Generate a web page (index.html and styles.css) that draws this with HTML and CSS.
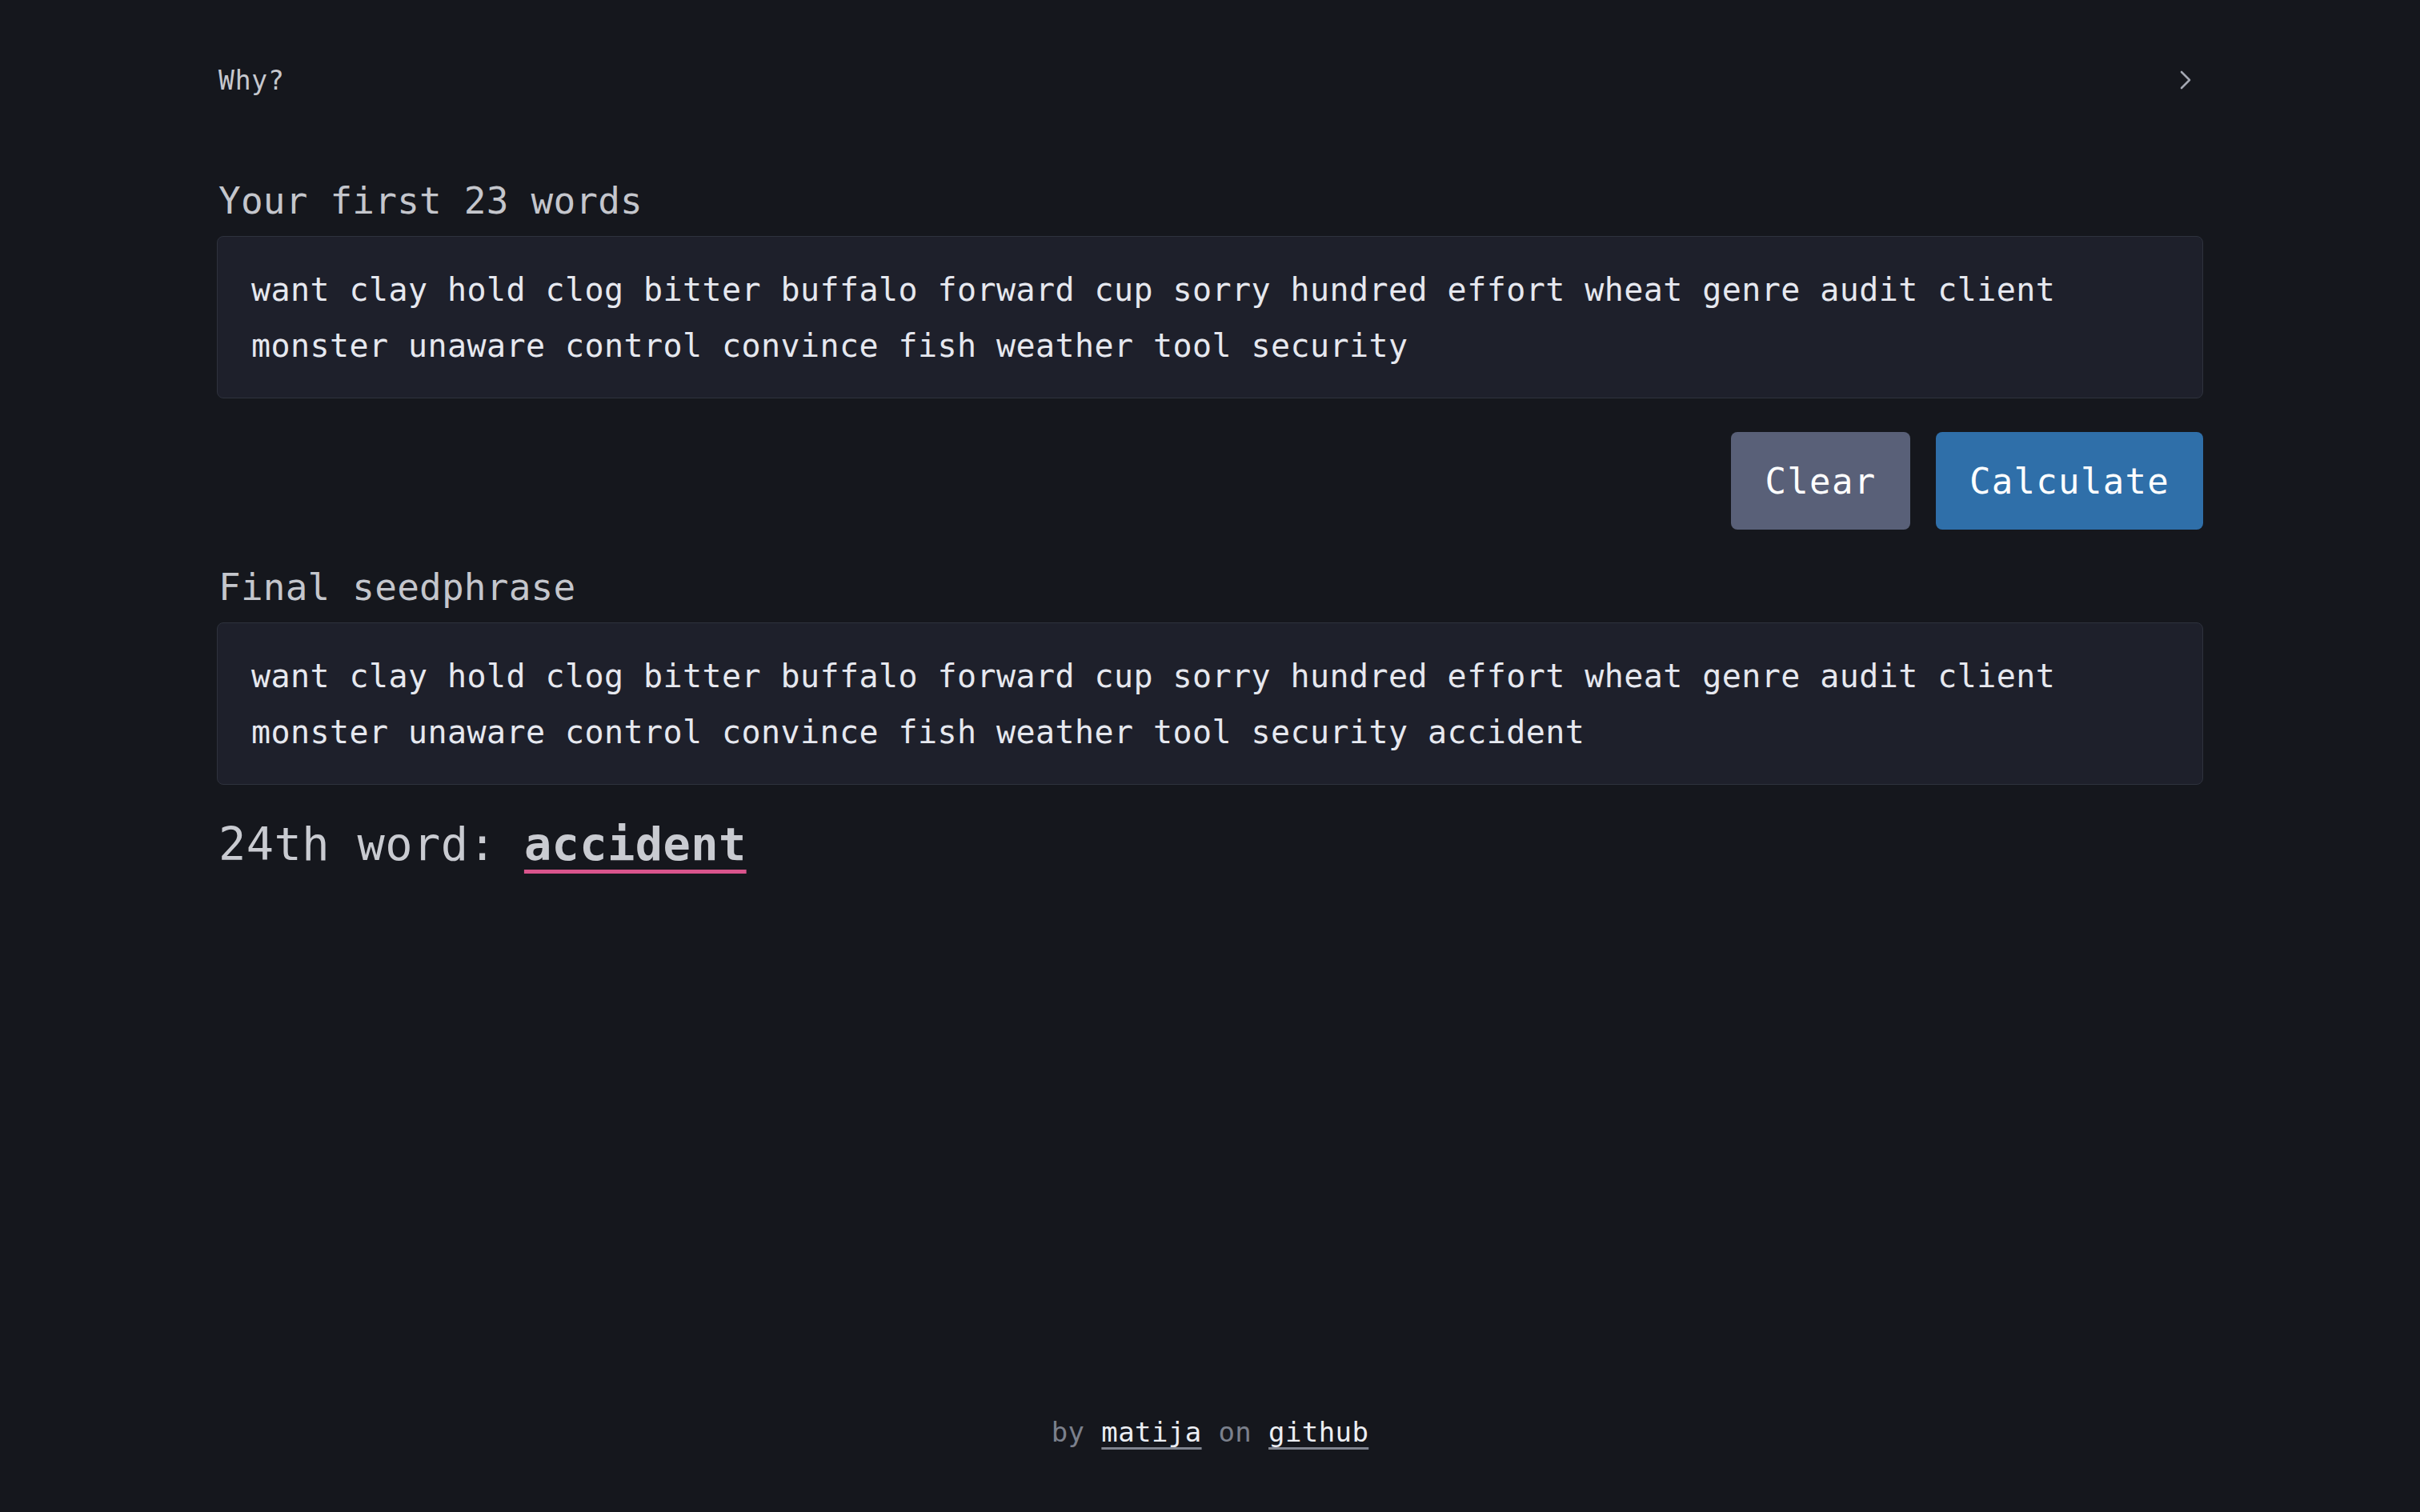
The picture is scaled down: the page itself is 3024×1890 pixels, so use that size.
FILE: index.html
```html
<!DOCTYPE html>
<html lang="en">
<head>
<meta charset="utf-8">
<title>24th word</title>
<link rel="stylesheet" href="styles.css">
</head>
<body>
<div class="page">
  <main class="container">
    <div class="why-row">
      <span class="why">Why?</span>
      <svg class="chevron" width="24" height="26" viewBox="0 0 24 26"><path d="M7 3 L17 13 L7 23" fill="none" stroke="#a3a7b2" stroke-width="2.6" stroke-linecap="round" stroke-linejoin="round"/></svg>
    </div>
    <section class="block">
      <h2 class="label">Your first 23 words</h2>
      <div class="box">want clay hold clog bitter buffalo forward cup sorry hundred effort wheat genre audit client monster unaware control convince fish weather tool security</div>
    </section>
    <div class="actions">
      <button class="btn btn-clear">Clear</button>
      <button class="btn btn-calc">Calculate</button>
    </div>
    <section class="block">
      <h2 class="label">Final seedphrase</h2>
      <div class="box">want clay hold clog bitter buffalo forward cup sorry hundred effort wheat genre audit client monster unaware control convince fish weather tool security accident</div>
    </section>
    <p class="result">24th word: <span class="word">accident</span></p>
  </main>
  <footer class="footer">by <a href="#">matija</a> on <a href="#">github</a></footer>
</div>
</body>
</html>
```

FILE: styles.css
```css
html, body {
  margin: 0;
  padding: 0;
  background: #15171d;
}
body {
  font-family: "DejaVu Sans Mono", "Liberation Mono", monospace;
  color: #c9cbd1;
}
.page {
  min-height: 1890px;
  display: flex;
  flex-direction: column;
}
.container {
  width: 2482px;
  margin: 0 auto;
  display: flex;
  flex-direction: column;
}
.why-row {
  display: flex;
  justify-content: space-between;
  align-items: center;
  height: 60px;
  margin-top: 70px;
  padding: 0 10px 0 2px;
}
.why {
  font-size: 33px;
  letter-spacing: 0.8px;
  color: #c6c8ce;
}
.chevron {
  display: block;
}
.block {
  display: flex;
  flex-direction: column;
}
.label {
  margin: 91px 0 14px 2px;
  font-weight: normal;
  font-size: 46px;
  line-height: 60px;
  letter-spacing: 0.2px;
  color: #c4c6cc;
}
.box {
  background: #1e202b;
  border: 1px solid #2e323d;
  border-radius: 8px;
  padding: 31px 42px 30px;
  font-size: 40px;
  letter-spacing: 0.42px;
  line-height: 70px;
  color: #e6e8ef;
}
.actions {
  display: flex;
  justify-content: flex-end;
  gap: 32px;
  margin-top: 42px;
}
.btn {
  font-family: "DejaVu Sans Mono", "Liberation Mono", monospace;
  font-size: 44px;
  letter-spacing: 1.3px;
  height: 122px;
  border: none;
  border-radius: 8px;
  color: #ffffff;
  padding: 0 40px;
}
.btn-clear {
  background: #596078;
  width: 224px;
}
.btn-calc {
  background: #2f6fa9;
  width: 334px;
}
.actions + .block .label {
  margin-top: 42px;
}
.result {
  margin: 36px 0 0 2px;
  font-size: 57px;
  line-height: 76px;
  letter-spacing: 0.4px;
  color: #c9cbd1;
}
.word {
  font-weight: bold;
  text-decoration: underline;
  text-decoration-color: #d9548c;
  text-decoration-thickness: 5px;
  text-underline-offset: 12px;
}
.footer {
  margin-top: auto;
  padding-bottom: 76px;
  text-align: center;
  font-size: 34px;
  line-height: 48px;
  letter-spacing: 0.4px;
  color: #7b808c;
}
.footer a {
  color: #eceef3;
  text-decoration: underline;
  text-decoration-color: #80848f;
  text-decoration-thickness: 3px;
  text-underline-offset: 7px;
}
```
